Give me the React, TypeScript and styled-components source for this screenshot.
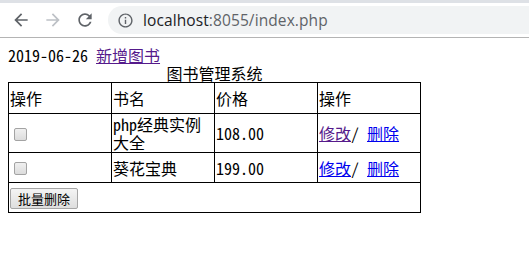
import React from "react";
import styled, { createGlobalStyle } from "styled-components";

const GlobalStyle = createGlobalStyle`
  html, body { margin: 0; padding: 0; background: #ffffff; }
  body { font-family: "Noto Sans Mono CJK SC", "Noto Sans CJK SC", monospace; }
`;

const Chrome = styled.div`
  display: flex;
  flex-direction: column;
`;

const TopStrip = styled.div`
  height: 3px;
  background: #dee1e6;
`;

const Toolbar = styled.div`
  height: 35px;
  display: flex;
  align-items: center;
  padding-left: 5px;
  background: #ffffff;
  border-bottom: 1px solid #b4b4b4;
  box-sizing: border-box;
`;

const NavButton = styled.div<{ $disabled?: boolean }>`
  width: 32px;
  height: 28px;
  display: flex;
  align-items: center;
  justify-content: center;
  color: ${(p) => (p.$disabled ? "#bdc1c6" : "#5f6368")};
`;

const Omnibox = styled.div`
  flex: 1;
  margin-left: 7px;
  height: 28px;
  border-radius: 14px 0 0 14px;
  background: #f1f3f4;
  display: flex;
  align-items: center;
  padding-left: 9px;
  gap: 9px;
  color: #5f6368;
`;

const UrlText = styled.span`
  font-family: "Open Sans", Roboto, sans-serif;
  font-size: 15.5px;
  color: #5f6368;
  letter-spacing: 0.1px;
`;

const Host = styled.span`
  color: #202124;
`;

const Page = styled.div`
  padding: 8px;
  font-family: "Noto Sans Mono CJK SC", "Noto Sans CJK SC", monospace;
  font-size: 16px;
  line-height: 18px;
  color: #000;
`;

const DateLine = styled.div`
  height: 18px;
`;

const Link = styled.a<{ $visited?: boolean }>`
  color: ${(p) => (p.$visited ? "#551a8b" : "#0000ee")};
  text-decoration: underline;
  cursor: pointer;
`;

const BookTable = styled.table`
  border-collapse: collapse;
  table-layout: fixed;
  width: 413px;
`;

const Caption = styled.caption`
  text-align: center;
  line-height: 18px;
  height: 18px;
`;

const Cell = styled.td<{ $h?: number }>`
  border: 1px solid #000;
  padding: 1px;
  height: ${(p) => (p.$h ? `${p.$h}px` : "auto")};
  vertical-align: middle;
  text-align: left;
  box-sizing: border-box;
`;

const Check = styled.input.attrs({ type: "checkbox" })`
  appearance: none;
  -webkit-appearance: none;
  width: 13px;
  height: 13px;
  margin: 3px 3px 3px 4px;
  box-sizing: border-box;
  border: 1px solid #a3a3a3;
  border-radius: 2px;
  background: linear-gradient(#f0f0f0, #dcdcdc);
  vertical-align: middle;
`;

const Sep = styled.span`
  margin-right: 8px;
`;

const Button = styled.button`
  font-family: "Noto Sans Mono CJK SC", "Noto Sans CJK SC", monospace;
  font-size: 13px;
  line-height: 17px;
  height: 21px;
  padding: 0 7px;
  margin: 0;
  border: 1px solid #a6a6a6;
  border-radius: 2px;
  background: linear-gradient(#f4f4f4, #dedede);
  color: #000;
  vertical-align: middle;
`;

const BackIcon = () => (
  <svg width="20" height="20" viewBox="0 0 24 24" fill="currentColor">
    <path d="M20 11H7.83l5.59-5.59L12 4l-8 8 8 8 1.41-1.41L7.83 13H20v-2z" />
  </svg>
);

const ForwardIcon = () => (
  <svg width="20" height="20" viewBox="0 0 24 24" fill="currentColor">
    <path d="M4 11h12.17l-5.59-5.59L12 4l8 8-8 8-1.41-1.41L16.17 13H4v-2z" />
  </svg>
);

const ReloadIcon = () => (
  <svg width="20" height="20" viewBox="0 0 24 24" fill="currentColor">
    <path d="M17.65 6.35C16.2 4.9 14.21 4 12 4c-4.42 0-7.99 3.58-7.99 8s3.57 8 7.99 8c3.73 0 6.84-2.55 7.73-6h-2.08c-.82 2.33-3.04 4-5.65 4-3.31 0-6-2.69-6-6s2.69-6 6-6c1.66 0 3.14.69 4.22 1.78L13 11h7V4l-2.35 2.35z" />
  </svg>
);

const InfoIcon = () => (
  <svg width="17" height="17" viewBox="0 0 24 24" fill="currentColor">
    <path d="M11 7h2v2h-2zm0 4h2v6h-2zm1-9C6.48 2 2 6.480 2 12s4.48 10 10 10 10-4.48 10-10S17.52 2 12 2zm0 18c-4.41 0-8-3.59-8-8s3.59-8 8-8 8 3.59 8 8-3.59 8-8 8z" />
  </svg>
);

const books = [
  { name: "php经典实例大全", price: "108.00", editVisited: true },
  { name: "葵花宝典", price: "199.00", editVisited: false },
];

export default function App() {
  return (
    <>
      <GlobalStyle />
      <Chrome>
        <TopStrip />
        <Toolbar>
          <NavButton>
            <BackIcon />
          </NavButton>
          <NavButton $disabled>
            <ForwardIcon />
          </NavButton>
          <NavButton>
            <ReloadIcon />
          </NavButton>
          <Omnibox>
            <InfoIcon />
            <UrlText>
              <Host>localhost</Host>:8055/index.php
            </UrlText>
          </Omnibox>
        </Toolbar>
      </Chrome>
      <Page>
        <DateLine>
          2019-06-26 <Link $visited>新增图书</Link>
        </DateLine>
        <BookTable>
          <Caption>图书管理系统</Caption>
          <tbody>
            <tr>
              <Cell $h={31}>操作</Cell>
              <Cell $h={31}>书名</Cell>
              <Cell $h={31}>价格</Cell>
              <Cell $h={31}>操作</Cell>
            </tr>
            {books.map((b) => (
              <tr key={b.name}>
                <Cell $h={30}>
                  <Check />
                </Cell>
                <Cell $h={30}>{b.name}</Cell>
                <Cell $h={30}>{b.price}</Cell>
                <Cell $h={30}>
                  <Link $visited={b.editVisited}>修改</Link>
                  <Sep>/</Sep>
                  <Link>删除</Link>
                </Cell>
              </tr>
            ))}
            <tr>
              <Cell $h={30} colSpan={4}>
                <Button>批量删除</Button>
              </Cell>
            </tr>
          </tbody>
        </BookTable>
      </Page>
    </>
  );
}
